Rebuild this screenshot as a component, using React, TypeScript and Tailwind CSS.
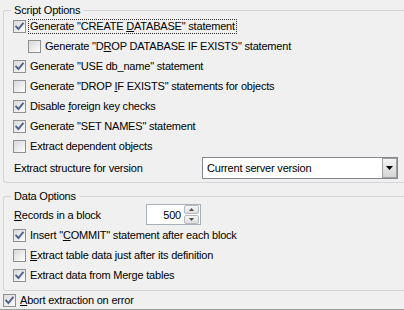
import type { ReactNode } from 'react';

function CheckBox({ checked }: { checked?: boolean }) {
  return (
    <div className="w-[13px] h-[13px] shrink-0 border border-[#8e8f8f] bg-gradient-to-br from-[#d9d9d9] to-[#fdfdfd] flex items-center justify-center">
      {checked && (
        <svg width="11" height="11" viewBox="0 0 11 11">
          <path d="M2.2 5.6 L4.4 8 L8.8 2.6" fill="none" stroke="#4d6090" strokeWidth="1.9" strokeLinecap="square" />
        </svg>
      )}
    </div>
  );
}

function Row({ checked, children, indent, focus }: { checked?: boolean; children: ReactNode; indent?: boolean; focus?: boolean }) {
  return (
    <div className={`h-[20px] flex items-center gap-[3px] ${indent ? 'ml-[15px]' : ''}`}>
      <CheckBox checked={checked} />
      <span className={`leading-[13px] px-[1px] ${focus ? 'outline outline-1 outline-dotted outline-[#333] outline-offset-[0px]' : ''}`}>
        {children}
      </span>
    </div>
  );
}

function GroupBox({ title, className, children }: { title: string; className: string; children: ReactNode }) {
  return (
    <div className={`relative ml-[3px] border-l border-t border-b border-[#d5d5d5] rounded-l-[3px] pl-[9px] ${className}`}>
      <span className="absolute left-[7px] top-[-8px] px-[3px] bg-[#f0f0f0] leading-[14px]">{title}</span>
      {children}
    </div>
  );
}

export default function App() {
  return (
    <div
      className="w-[404px] h-[310px] overflow-hidden bg-[#f0f0f0] text-[11px] tracking-[-0.2px] text-black border-b border-[#a0a0a0] flex flex-col"
      style={{ fontFamily: '"Liberation Sans", Arial, sans-serif' }}
    >
      <GroupBox title="Script Options" className="mt-[10px] h-[174px] pt-[5px]">
        <Row checked focus>
          Generate "CREATE <span className="underline">D</span>ATABASE" statement
        </Row>
        <Row indent>
          Generate "D<span className="underline">R</span>OP DATABASE IF EXISTS" statement
        </Row>
        <Row checked>Generate "USE db_name" statement</Row>
        <Row>
          Generate "DROP <span className="underline">I</span>F EXISTS" statements for objects
        </Row>
        <Row checked>
          Disable <span className="underline">f</span>oreign key checks
        </Row>
        <Row checked>Generate "SET NAMES" statement</Row>
        <Row>Extract dependent objects</Row>
        <div className="mt-[1px] h-[22px] flex items-center">
          <span className="w-[189px] pl-[1px]">Extract structure for version</span>
          <div className="w-[196px] h-[22px] border border-[#828790] bg-white flex items-center justify-between">
            <span className="pl-[4px]">Current server version</span>
            <div className="w-[15px] h-[20px] border border-[#a0a0a0] bg-gradient-to-b from-[#f4f4f4] to-[#d5d5d5] flex items-center justify-center">
              <svg width="7" height="4" viewBox="0 0 7 4">
                <path d="M0 0 H7 L3.5 4 Z" fill="#000" />
              </svg>
            </div>
          </div>
        </div>
      </GroupBox>

      <GroupBox title="Data Options" className="mt-[13px] h-[95px] pt-[7px]">
        <div className="h-[21px] flex items-center">
          <span className="w-[133px] pl-[1px]">
            <span className="underline">R</span>ecords in a block
          </span>
          <div className="w-[55px] h-[21px] border border-[#a9b0b8] bg-white flex items-center justify-between">
            <span className="flex-1 text-right pr-[3px]">500</span>
            <div className="w-[16px] h-[19px] flex flex-col gap-[1px] pr-[1px]">
              <div className="flex-1 border border-[#b5b9c0] rounded-[2px] bg-gradient-to-b from-[#f6f6f6] to-[#dedede] flex items-center justify-center">
                <svg width="5" height="3" viewBox="0 0 5 3">
                  <path d="M0 3 H5 L2.5 0 Z" fill="#4d4d4d" />
                </svg>
              </div>
              <div className="flex-1 border border-[#b5b9c0] rounded-[2px] bg-gradient-to-b from-[#f6f6f6] to-[#dedede] flex items-center justify-center">
                <svg width="5" height="3" viewBox="0 0 5 3">
                  <path d="M0 0 H5 L2.5 3 Z" fill="#4d4d4d" />
                </svg>
              </div>
            </div>
          </div>
        </div>
        <Row checked>
          Insert "<span className="underline">C</span>OMMIT" statement after each block
        </Row>
        <Row>
          <span className="underline">E</span>xtract table data just after its definition
        </Row>
        <Row checked>Extract data from Merge tables</Row>
      </GroupBox>

      <div className="ml-[3px] mt-[1px] h-[17px] flex items-center gap-[3px]">
        <CheckBox checked />
        <span className="px-[1px]">
          <span className="underline">A</span>bort extraction on error
        </span>
      </div>
    </div>
  );
}
